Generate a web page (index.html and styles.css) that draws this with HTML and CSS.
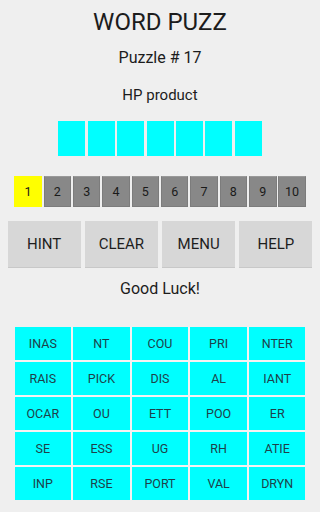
FILE: index.html
```html
<!DOCTYPE html>
<html>
<head>
<meta charset="utf-8">
<link rel="stylesheet" href="styles.css">
</head>
<body>
<div class="page">
  <div class="title">WORD PUZZ</div>
  <div class="puzzle">Puzzle # 17</div>
  <div class="clue">HP product</div>
  <div class="answer">
    <div class="slot"></div><div class="slot"></div><div class="slot"></div><div class="slot"></div><div class="slot"></div><div class="slot"></div><div class="slot"></div>
  </div>
  <div class="levels">
    <div class="lvl active">1</div>
    <div class="lvl">2</div>
    <div class="lvl">3</div>
    <div class="lvl">4</div>
    <div class="lvl">5</div>
    <div class="lvl">6</div>
    <div class="lvl">7</div>
    <div class="lvl">8</div>
    <div class="lvl">9</div>
    <div class="lvl">10</div>
  </div>
  <div class="buttons">
    <div class="btn">HINT</div>
    <div class="btn">CLEAR</div>
    <div class="btn">MENU</div>
    <div class="btn">HELP</div>
  </div>
  <div class="status">Good Luck!</div>
  <div class="grid">
    <div class="cell">INAS</div><div class="cell">NT</div><div class="cell">COU</div><div class="cell">PRI</div><div class="cell">NTER</div>
    <div class="cell">RAIS</div><div class="cell">PICK</div><div class="cell">DIS</div><div class="cell">AL</div><div class="cell">IANT</div>
    <div class="cell">OCAR</div><div class="cell">OU</div><div class="cell">ETT</div><div class="cell">POO</div><div class="cell">ER</div>
    <div class="cell">SE</div><div class="cell">ESS</div><div class="cell">UG</div><div class="cell">RH</div><div class="cell">ATIE</div>
    <div class="cell">INP</div><div class="cell">RSE</div><div class="cell">PORT</div><div class="cell">VAL</div><div class="cell">DRYN</div>
  </div>
</div>
</body>
</html>
```
FILE: styles.css
```css
html, body {
  margin: 0;
  padding: 0;
  background: #efefef;
}
body {
  width: 320px;
  height: 512px;
  overflow: hidden;
  font-family: Roboto, "Liberation Sans", sans-serif;
  color: #1c1c1c;
}
.page {
  display: flex;
  flex-direction: column;
  align-items: center;
  padding-top: 8px;
}
.title {
  font-size: 24px;
  line-height: 28px;
}
.puzzle {
  margin-top: 12px;
  font-size: 16px;
  line-height: 20px;
}
.clue {
  margin-top: 17px;
  font-size: 15px;
  line-height: 20px;
}
.answer {
  margin-top: 16px;
  display: flex;
  gap: 2.4px;
}
.slot {
  width: 27px;
  height: 35px;
  background: #00ffff;
}
.levels {
  margin-top: 20px;
  display: flex;
  gap: 1.75px;
}
.lvl {
  box-sizing: border-box;
  width: 27.6px;
  height: 31px;
  background: #888888;
  border: 1px solid #7c7c7c;
  border-top-color: #999;
  display: flex;
  align-items: center;
  justify-content: center;
  font-size: 12.5px;
  color: #1a1a1a;
}
.lvl.active {
  background: #ffff00;
  border-color: #ffff00;
}
.buttons {
  margin-top: 14px;
  display: flex;
  gap: 4.3px;
}
.btn {
  width: 73px;
  height: 46px;
  background: #d7d7d7;
  box-shadow: 0 1px 0 #c8c8c8;
  display: flex;
  align-items: center;
  justify-content: center;
  font-size: 15px;
  color: #1e1e1e;
}
.status {
  margin-top: 12.2px;
  font-size: 16px;
  line-height: 20px;
}
.grid {
  margin-top: 28.1px;
  display: grid;
  grid-template-columns: repeat(5, 56.6px);
  grid-auto-rows: 33px;
  gap: 2px;
  background: #f6f2f2;
}
.cell {
  background: #00ffff;
  display: flex;
  align-items: center;
  justify-content: center;
  font-size: 12.5px;
  color: #1f3f4a;
}
```
